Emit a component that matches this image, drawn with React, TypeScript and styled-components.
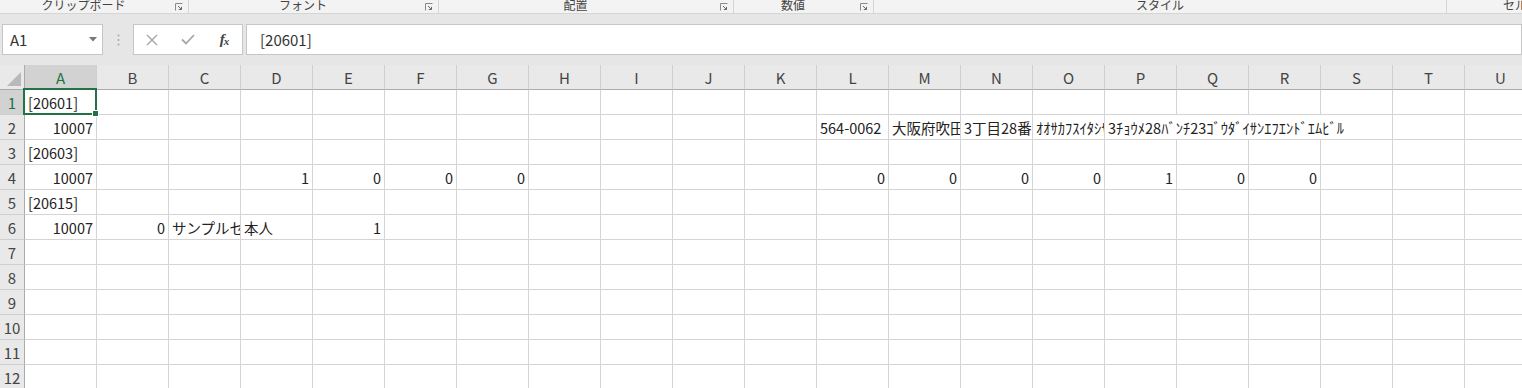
import React from 'react';
import styled, { createGlobalStyle } from 'styled-components';

const GlobalStyle = createGlobalStyle`
  html, body {
    margin: 0;
    padding: 0;
    background: #ffffff;
    overflow: hidden;
  }
  body {
    font-family: "Noto Sans CJK JP", "Noto Sans", sans-serif;
  }
`;

const GREEN = '#217346';

const Window = styled.div`
  width: 1522px;
  height: 388px;
  overflow: hidden;
  display: flex;
  flex-direction: column;
  background: #e6e6e6;
`;

/* ---------- ribbon group captions ---------- */

const Ribbon = styled.div`
  height: 13px;
  flex: none;
  display: flex;
  background: #f3f3f3;
  border-bottom: 1px solid #d5d5d5;
  overflow: hidden;
`;

const Group = styled.div<{ $w: number }>`
  flex: 0 0 ${(p) => p.$w}px;
  display: flex;
  align-items: flex-start;
  border-right: 1px solid #d5d5d5;
  box-sizing: border-box;
  overflow: hidden;
`;

const GroupLabel = styled.span<{ $left?: boolean }>`
  flex: 1;
  text-align: ${(p) => (p.$left ? 'left' : 'center')};
  padding-left: ${(p) => (p.$left ? '56px' : '0')};
  font-size: 12px;
  line-height: 12px;
  margin-top: -1px;
  color: #444;
  white-space: nowrap;
`;

const Launcher = styled.svg`
  flex: none;
  width: 8px;
  height: 8px;
  margin: 3px 5px 0 8px;
`;

const LauncherIcon = () => (
  <Launcher viewBox="0 0 8 8">
    <path d="M0.5 7.5V0.5H7.5" fill="none" stroke="#8a8a8a" strokeWidth="1" />
    <path d="M3 3L6.5 6.5M6.5 3.8V6.5H3.8" fill="none" stroke="#6a6a6a" strokeWidth="1" />
  </Launcher>
);

/* ---------- formula bar ---------- */

const Band = styled.div`
  height: 10px;
  flex: none;
  background: #e6e6e6;
`;

const FormulaRow = styled.div`
  height: 31px;
  flex: none;
  display: flex;
  align-items: stretch;
  background: #e6e6e6;
`;

const Field = styled.div`
  background: #ffffff;
  border: 1px solid #c6c6c6;
  box-sizing: border-box;
  display: flex;
  align-items: center;
`;

const NameBox = styled(Field)`
  width: 101px;
  margin-left: 2px;
  padding: 0 5px 0 7px;
  justify-content: space-between;
  font-size: 15px;
  color: #333;
`;

const Grip = styled.div`
  width: 30px;
  display: flex;
  align-items: center;
  justify-content: center;
`;

const ButtonBox = styled(Field)`
  width: 110px;
`;

const FormulaButton = styled.div`
  flex: 1;
  display: flex;
  align-items: center;
  justify-content: center;
`;

const Fx = styled.span`
  font-family: "Liberation Serif", serif;
  font-style: italic;
  font-weight: bold;
  font-size: 15px;
  color: #444;
  letter-spacing: -1px;
  & > sub {
    font-size: 11px;
    vertical-align: -1px;
  }
`;

const FormulaInput = styled(Field)`
  flex: 1;
  margin-left: 3px;
  padding-left: 13px;
  font-size: 15px;
  color: #333;
`;

/* ---------- sheet ---------- */

const COLS = 'ABCDEFGHIJKLMNOPQRSTU'.split('');

const Sheet = styled.div`
  flex: none;
  display: grid;
  grid-template-columns: 25px repeat(${COLS.length}, 72px);
  grid-auto-rows: 25px;
  background: #ffffff;
`;

const Corner = styled.div`
  background: #e9e9e9;
  border-right: 1px solid #ababab;
  border-bottom: 1px solid #ababab;
  box-sizing: border-box;
  display: flex;
  align-items: flex-end;
  justify-content: flex-end;
  padding: 0 3px 3px 0;
`;

const ColHeader = styled.div<{ $active?: boolean }>`
  background: ${(p) => (p.$active ? '#d2d2d2' : '#e9e9e9')};
  color: ${(p) => (p.$active ? GREEN : '#444')};
  border-right: 1px solid #cfcfcf;
  border-bottom: 1px solid ${(p) => (p.$active ? GREEN : '#ababab')};
  box-sizing: border-box;
  display: flex;
  align-items: center;
  justify-content: center;
  font-size: 15px;
`;

const RowHeader = styled.div<{ $active?: boolean }>`
  background: ${(p) => (p.$active ? '#d2d2d2' : '#e9e9e9')};
  color: ${(p) => (p.$active ? GREEN : '#444')};
  border-right: 1px solid ${(p) => (p.$active ? GREEN : '#ababab')};
  border-bottom: 1px solid #cfcfcf;
  box-sizing: border-box;
  display: flex;
  align-items: center;
  justify-content: center;
  font-size: 15px;
`;

const Cell = styled.div<{ $right?: boolean; $span?: number; $selected?: boolean }>`
  grid-column: span ${(p) => p.$span ?? 1};
  border-right: 1px solid #d4d4d4;
  border-bottom: 1px solid #d4d4d4;
  box-sizing: border-box;
  display: flex;
  align-items: center;
  justify-content: ${(p) => (p.$right ? 'flex-end' : 'flex-start')};
  padding: 0 3px;
  font-size: 14.5px;
  color: #222;
  white-space: nowrap;
  overflow: ${(p) => (p.$selected ? 'visible' : 'hidden')};
  position: ${(p) => (p.$selected ? 'relative' : 'static')};
  z-index: ${(p) => (p.$selected ? 2 : 'auto')};

  ${(p) =>
    p.$selected &&
    `
    &::after {
      content: '';
      position: absolute;
      top: -2px;
      left: -2px;
      right: -1px;
      bottom: -1px;
      border: 2px solid ${GREEN};
      pointer-events: none;
    }
    &::before {
      content: '';
      position: absolute;
      right: -3px;
      bottom: -3px;
      width: 5px;
      height: 5px;
      background: ${GREEN};
      border: 1px solid #ffffff;
      z-index: 3;
    }
  `}
`;

type CellData = { v: string; right?: boolean; span?: number };
type RowData = Record<string, CellData>;

const num = (v: string): CellData => ({ v, right: true });
const txt = (v: string, span?: number): CellData => ({ v, span });

const DATA: RowData[] = [
  { A: txt('[20601]') },
  {
    A: num('10007'),
    L: txt('564-0062'),
    M: txt('大阪府吹田市山田西'),
    N: txt('3丁目28番地23号'),
    O: txt('ｵｵｻｶﾌｽｲﾀｼﾔﾏﾀﾞﾆｼ'),
    P: txt('3ﾁｮｳﾒ28ﾊﾞﾝﾁ23ｺﾞｳﾀﾞｲｻﾝｴﾌｴﾝﾄﾞｴﾑﾋﾞﾙ', 4),
  },
  { A: txt('[20603]') },
  {
    A: num('10007'),
    D: num('1'),
    E: num('0'),
    F: num('0'),
    G: num('0'),
    L: num('0'),
    M: num('0'),
    N: num('0'),
    O: num('0'),
    P: num('1'),
    Q: num('0'),
    R: num('0'),
  },
  { A: txt('[20615]') },
  {
    A: num('10007'),
    B: num('0'),
    C: txt('サンプルセンター'),
    D: txt('本人'),
    E: num('1'),
  },
  {},
  {},
  {},
  {},
  {},
  {},
];

const renderRow = (row: RowData, r: number) => {
  const out: React.ReactNode[] = [
    <RowHeader key={`h${r}`} $active={r === 0}>
      {r + 1}
    </RowHeader>,
  ];
  let skip = 0;
  COLS.forEach((c, i) => {
    if (skip > 0) {
      skip--;
      return;
    }
    const d = row[c];
    const span = d?.span ?? 1;
    skip = span - 1;
    out.push(
      <Cell key={`${r}-${i}`} $right={d?.right} $span={span} $selected={r === 0 && c === 'A'}>
        {d?.v}
      </Cell>
    );
  });
  return out;
};

const GROUPS: { label: string; w: number; launcher: boolean; left?: boolean }[] = [
  { label: 'クリップボード', w: 189, launcher: true },
  { label: 'フォント', w: 250, launcher: true },
  { label: '配置', w: 295, launcher: true },
  { label: '数値', w: 140, launcher: true },
  { label: 'スタイル', w: 573, launcher: false },
  { label: 'セル', w: 150, launcher: false, left: true },
];

export default function App() {
  return (
    <>
      <GlobalStyle />
      <Window>
        <Ribbon>
          {GROUPS.map((g) => (
            <Group key={g.label} $w={g.w}>
              <GroupLabel $left={g.left}>{g.label}</GroupLabel>
              {g.launcher && <LauncherIcon />}
            </Group>
          ))}
        </Ribbon>
        <Band />
        <FormulaRow>
          <NameBox>
            <span>A1</span>
            <svg width="8" height="5" viewBox="0 0 8 5">
              <path d="M0 0H8L4 4.5Z" fill="#777" />
            </svg>
          </NameBox>
          <Grip>
            <svg width="3" height="12" viewBox="0 0 3 12">
              <circle cx="1.5" cy="1.5" r="1" fill="#a8a8a8" />
              <circle cx="1.5" cy="6" r="1" fill="#a8a8a8" />
              <circle cx="1.5" cy="10.5" r="1" fill="#a8a8a8" />
            </svg>
          </Grip>
          <ButtonBox>
            <FormulaButton>
              <svg width="12" height="12" viewBox="0 0 12 12">
                <path d="M1 1L11 11M11 1L1 11" stroke="#a6a6a6" strokeWidth="1.4" />
              </svg>
            </FormulaButton>
            <FormulaButton>
              <svg width="14" height="11" viewBox="0 0 14 11">
                <path d="M1 5.5L5 9.5L13 1" fill="none" stroke="#a6a6a6" strokeWidth="1.8" />
              </svg>
            </FormulaButton>
            <FormulaButton>
              <Fx>
                f<sub>x</sub>
              </Fx>
            </FormulaButton>
          </ButtonBox>
          <FormulaInput>[20601]</FormulaInput>
        </FormulaRow>
        <Band />
        <Sheet>
          <Corner>
            <svg width="14" height="14" viewBox="0 0 14 14">
              <path d="M14 0V14H0Z" fill="#b9b9b9" />
            </svg>
          </Corner>
          {COLS.map((c) => (
            <ColHeader key={c} $active={c === 'A'}>
              {c}
            </ColHeader>
          ))}
          {DATA.map((row, r) => renderRow(row, r))}
        </Sheet>
      </Window>
    </>
  );
}
